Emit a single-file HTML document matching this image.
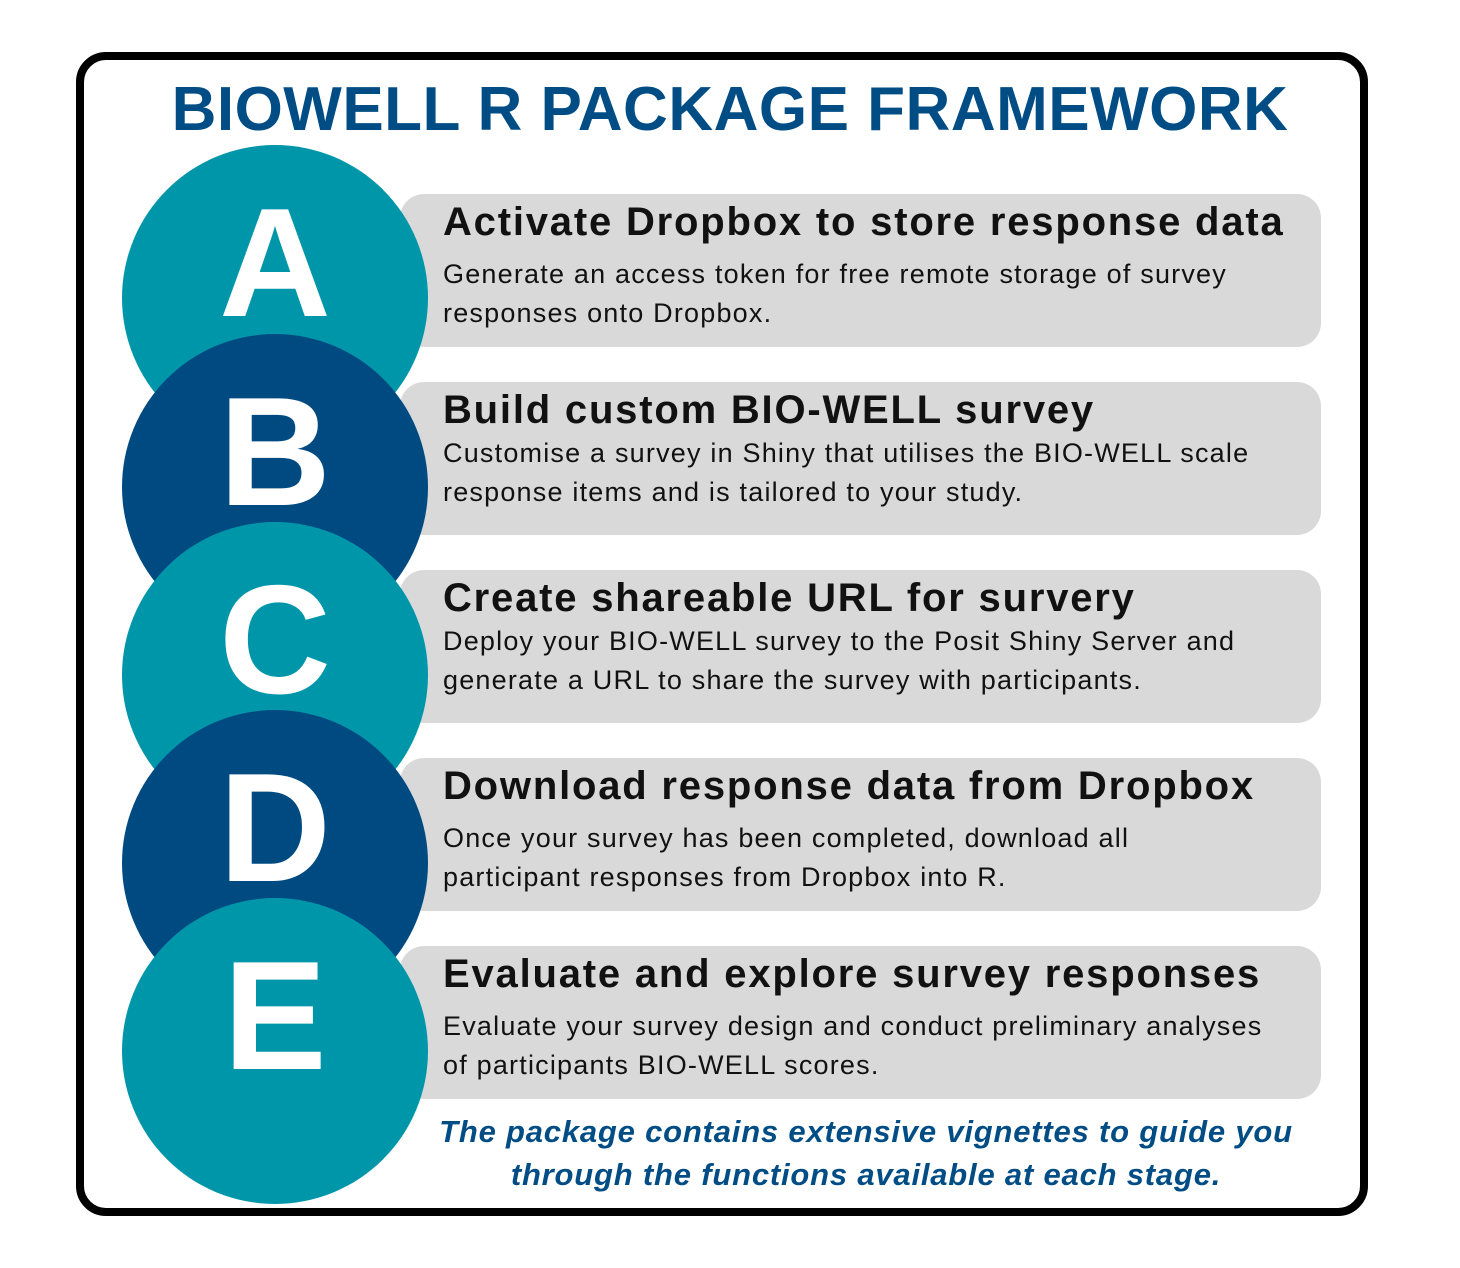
<!DOCTYPE html>
<html><head><style>
body{margin:0;background:#fff;width:1460px;height:1268px;position:relative;overflow:hidden;font-family:"Liberation Sans","DejaVu Sans",sans-serif}
.frame{position:absolute;left:76px;top:52px;width:1276px;height:1148px;border:8px solid #000;border-radius:30px}
.title{position:absolute;left:0;width:1460px;top:74px;text-align:center;font-weight:bold;font-size:62px;color:#004d86;letter-spacing:0.5px}
.box{position:absolute;left:400px;width:921px;height:153px;background:#d9d9d9;border-radius:24px}
.box h2{position:absolute;left:43px;top:6px;margin:0;font-size:40px;letter-spacing:1.8px;color:#111;white-space:nowrap}
.box p{position:absolute;left:43px;top:61px;margin:0;font-size:27px;letter-spacing:1.2px;line-height:39px;color:#111;white-space:nowrap}
.c{position:absolute;left:122px;width:306px;height:306px;border-radius:50%;color:#fff;font-weight:bold;font-size:155px;text-align:center;line-height:236px}
.t{background:#0096aa}.n{background:#004a82}
.foot{position:absolute;left:400px;width:932px;top:1110px;text-align:center;font-style:italic;font-weight:bold;font-size:31px;letter-spacing:0.8px;line-height:43px;color:#004d86}
</style></head><body>
<div class="frame"></div>
<div class="title">BIOWELL R PACKAGE FRAMEWORK</div>
<div class="box" style="top:194px"><h2>Activate Dropbox to store response data</h2><p>Generate an access token for free remote storage of survey<br>responses onto Dropbox.</p></div>
<div class="box" style="top:382px"><h2>Build custom BIO-WELL survey</h2><p style="top:52px">Customise a survey in Shiny that utilises the BIO-WELL scale<br>response items and is tailored to your study.</p></div>
<div class="box" style="top:570px"><h2>Create shareable URL for survery</h2><p style="top:52px">Deploy your BIO-WELL survey to the Posit Shiny Server and<br>generate a URL to share the survey with participants.</p></div>
<div class="box" style="top:758px"><h2>Download response data from Dropbox</h2><p>Once your survey has been completed, download all<br>participant responses from Dropbox into R.</p></div>
<div class="box" style="top:946px"><h2>Evaluate and explore survey responses</h2><p>Evaluate your survey design and conduct preliminary analyses<br>of participants BIO-WELL scores.</p></div>
<div class="c t" style="top:145px">A</div>
<div class="c n" style="top:334px">B</div>
<div class="c t" style="top:522px">C</div>
<div class="c n" style="top:710px">D</div>
<div class="c t" style="top:898px">E</div>
<div class="foot">The package contains extensive vignettes to guide you<br>through the functions available at each stage.</div>
</body></html>
